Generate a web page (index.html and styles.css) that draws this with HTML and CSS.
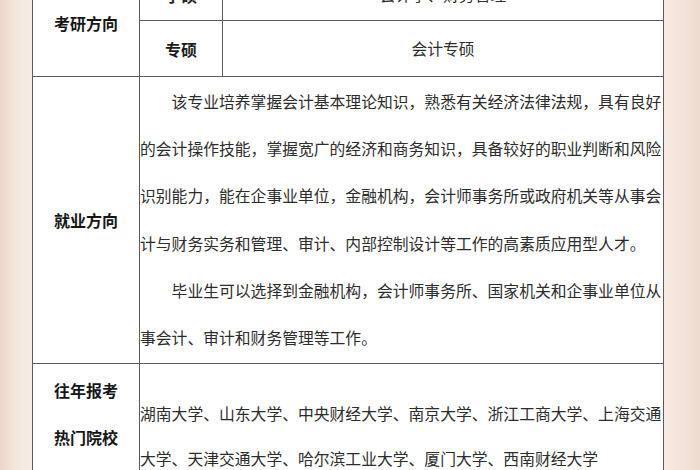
FILE: index.html
```html
<!DOCTYPE html>
<html lang="zh-CN">
<head>
<meta charset="utf-8">
<link rel="stylesheet" href="styles.css">
</head>
<body>
<div class="page">
  <div class="sheet">
    <div class="cell label kaoyan">考研方向</div>
    <div class="cell sub xueshuo">学硕</div>
    <div class="cell val xueshuo-v">会计学、财务管理</div>
    <div class="cell sub zhuanshuo">专硕</div>
    <div class="cell val zhuanshuo-v">会计专硕</div>

    <div class="cell label jiuye">就业方向</div>
    <div class="cell para jiuye-v">
      <span class="ln indent">该专业培养掌握会计基本理论知识，熟悉有关经济法律法规，具有良好</span>
      <span class="ln">的会计操作技能，掌握宽广的经济和商务知识，具备较好的职业判断和风险</span>
      <span class="ln">识别能力，能在企事业单位，金融机构，会计师事务所或政府机关等从事会</span>
      <span class="ln">计与财务实务和管理、审计、内部控制设计等工作的高素质应用型人才。</span>
      <span class="ln indent">毕业生可以选择到金融机构，会计师事务所、国家机关和企事业单位从</span>
      <span class="ln">事会计、审计和财务管理等工作。</span>
    </div>

    <div class="cell label schools">
      <span class="ln">往年报考</span>
      <span class="ln">热门院校</span>
    </div>
    <div class="cell para schools-v">
      <span class="ln">湖南大学、山东大学、中央财经大学、南京大学、浙江工商大学、上海交通</span>
      <span class="ln">大学、天津交通大学、哈尔滨工业大学、厦门大学、西南财经大学</span>
    </div>
  </div>
</div>
</body>
</html>
```

FILE: styles.css
```css
html, body {
  margin: 0;
  padding: 0;
}
body {
  width: 700px;
  height: 470px;
  overflow: hidden;
  font-family: "Noto Sans CJK SC", "Noto Sans", sans-serif;
  background:
    linear-gradient(to right,
      #ecd5c9 0px,
      #f3e5db 14px,
      #f6ece4 30px,
      #f7efe8 340px,
      #f6ebe2 664px,
      #f3e3d9 684px,
      #efdbd0 700px);
}
.page {
  padding-left: 32px;
  margin-top: -32px;
}
.sheet {
  width: 630px;
  display: grid;
  grid-template-columns: 106px 82px 440px;
  grid-template-rows: 51px 55px 286px 106px;
  gap: 1px;
  padding: 1px;
  background: #5a5a5a;
}
.cell {
  background: #ffffff;
  color: #2c2c2c;
  font-size: 15.8px;
  display: flex;
  align-items: center;
  justify-content: center;
  white-space: nowrap;
}
.label {
  font-weight: bold;
  color: #161616;
  font-size: 16px;
  grid-column: 1;
}
.kaoyan { grid-row: 1 / 3; }
.sub {
  grid-column: 2;
  font-weight: bold;
  color: #1c1c1c;
  font-size: 16px;
}
.xueshuo { grid-row: 1; }
.zhuanshuo { grid-row: 2; }
.val { grid-column: 3; }
.xueshuo-v { grid-row: 1; }
.zhuanshuo-v { grid-row: 2; }

.jiuye { grid-row: 3; }
.para {
  grid-column: 2 / 4;
  flex-direction: column;
  align-items: flex-start;
  justify-content: flex-start;
}
.ln {
  display: block;
}
.indent {
  padding-left: 31.6px;
}
.jiuye-v {
  grid-row: 3;
  padding-top: 1px;
  line-height: 47.2px;
}
.schools {
  grid-row: 4;
  flex-direction: column;
  justify-content: flex-start;
  padding-top: 3px;
  line-height: 47px;
}
.schools-v {
  grid-row: 4;
  padding-top: 27px;
  line-height: 45px;
}
```
